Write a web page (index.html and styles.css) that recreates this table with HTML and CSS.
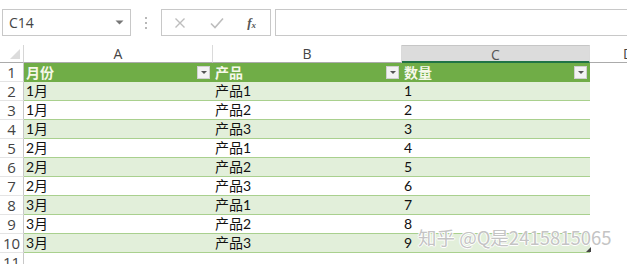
FILE: index.html
```html
<!DOCTYPE html>
<html lang="zh">
<head>
<meta charset="utf-8">
<title>Sheet</title>
<link rel="stylesheet" href="styles.css">
</head>
<body>
<div class="app">
  <div class="toolbar">
    <div class="namebox">
      <span class="ref">C14</span>
      <svg class="nb-arrow" width="9" height="5" viewBox="0 0 9 5"><path d="M0.5 0.5h8L4.5 4.5z" fill="#777"/></svg>
    </div>
    <div class="dots">
      <span></span><span></span><span></span>
    </div>
    <div class="fnbox">
      <svg width="12" height="12" viewBox="0 0 12 12"><path d="M1.5 1.5l9 9M10.5 1.5l-9 9" stroke="#bdbdbd" stroke-width="1.4" fill="none"/></svg>
      <svg width="14" height="12" viewBox="0 0 14 12"><path d="M1 6.5l4 4L13 1.5" stroke="#bdbdbd" stroke-width="1.6" fill="none"/></svg>
      <span class="fx">f<sub>x</sub></span>
    </div>
    <div class="formula"></div>
  </div>

  <div class="sheet">
    <div class="corner"><span class="tri"></span></div>
    <div class="colh">A</div>
    <div class="colh">B</div>
    <div class="colh sel">C</div>
    <div class="colh rest">D</div>

    <div class="rowh">1</div>
    <div class="th">月份<span class="flt"></span></div>
    <div class="th">产品<span class="flt"></span></div>
    <div class="th">数量<span class="flt"></span></div>
    <div class="blank"></div>

    <div class="rowh">2</div><div class="td band">1月</div><div class="td band">产品1</div><div class="td band">1</div><div class="blank"></div>
    <div class="rowh">3</div><div class="td">1月</div><div class="td">产品2</div><div class="td">2</div><div class="blank"></div>
    <div class="rowh">4</div><div class="td band">1月</div><div class="td band">产品3</div><div class="td band">3</div><div class="blank"></div>
    <div class="rowh">5</div><div class="td">2月</div><div class="td">产品1</div><div class="td">4</div><div class="blank"></div>
    <div class="rowh">6</div><div class="td band">2月</div><div class="td band">产品2</div><div class="td band">5</div><div class="blank"></div>
    <div class="rowh">7</div><div class="td">2月</div><div class="td">产品3</div><div class="td">6</div><div class="blank"></div>
    <div class="rowh">8</div><div class="td band">3月</div><div class="td band">产品1</div><div class="td band">7</div><div class="blank"></div>
    <div class="rowh">9</div><div class="td">3月</div><div class="td">产品2</div><div class="td">8</div><div class="blank"></div>
    <div class="rowh">10</div><div class="td band">3月</div><div class="td band">产品3</div><div class="td band last">9<span class="handle"></span></div><div class="blank"></div>
    <div class="rowh">11</div><div class="empty"></div><div class="empty"></div><div class="empty"></div><div class="blank"></div>
  </div>

  <div class="watermark">知乎 @Q是2415815065</div>
</div>
</body>
</html>
```

FILE: styles.css
```css
html, body {
  margin: 0;
  padding: 0;
  background: #ffffff;
  overflow: hidden;
}

.app {
  position: relative;
  width: 627px;
  height: 264px;
  overflow: hidden;
  font-family: "Lato", "Noto Sans CJK SC", sans-serif;
}

.toolbar {
  display: flex;
  align-items: center;
  height: 45px;
  padding-left: 2px;
  box-sizing: border-box;
}

.namebox {
  width: 129px;
  height: 27px;
  box-sizing: border-box;
  border: 1px solid #c8c8c8;
  display: flex;
  align-items: center;
  justify-content: space-between;
  padding: 0 6px 0 6px;
}

.ref {
  font-family: "Open Sans", "Liberation Sans", sans-serif;
  font-size: 14px;
  color: #444;
}

.dots {
  width: 30px;
  display: flex;
  flex-direction: column;
  align-items: center;
  gap: 3px;
}

.dots span {
  width: 2px;
  height: 2px;
  background: #b8b8b8;
}

.fnbox {
  width: 110px;
  height: 27px;
  box-sizing: border-box;
  border: 1px solid #c8c8c8;
  display: flex;
  align-items: center;
  justify-content: space-between;
  padding: 0 14px 0 12px;
}

.fx {
  font-family: "Liberation Serif", serif;
  font-style: italic;
  font-weight: bold;
  font-size: 13px;
  color: #555;
}

.fx sub {
  font-size: 9px;
  vertical-align: -1px;
}

.formula {
  flex: 1;
  height: 27px;
  margin-left: 4px;
  box-sizing: border-box;
  border: 1px solid #c8c8c8;
  border-right: none;
}

.sheet {
  display: grid;
  grid-template-columns: 24px 189px 189px 188px 1fr;
  grid-template-rows: 18px repeat(11, 19px);
}

.corner {
  position: relative;
  border-right: 1px solid #d6d6d6;
  border-bottom: 1px solid #ababab;
}

.corner .tri {
  position: absolute;
  right: 3px;
  bottom: 3px;
  width: 0;
  height: 0;
  border-left: 10px solid transparent;
  border-bottom: 10px solid #dcdcdc;
}

.colh {
  font-family: "Open Sans", "Liberation Sans", sans-serif;
  font-size: 14px;
  color: #444;
  text-align: center;
  line-height: 18px;
  border-right: 1px solid #dadada;
  border-bottom: 1px solid #ababab;
  box-sizing: border-box;
}

.colh.sel {
  background: #dcdcdc;
  border-bottom: 2px solid #217346;
  border-top: 1px solid #c6c6c6;
  color: #555;
}

.colh.rest {
  border-right: none;
  text-align: left;
  padding-left: 33px;
}

.rowh {
  font-family: "Open Sans", "Liberation Sans", sans-serif;
  font-size: 15px;
  color: #444;
  text-align: center;
  line-height: 19px;
  border-right: 1px solid #c8c8c8;
  border-bottom: 1px solid #e4e4e4;
  box-sizing: border-box;
}

.th {
  position: relative;
  background: #70ad47;
  color: #f6f8ea;
  font-weight: bold;
  font-size: 14px;
  line-height: 19px;
  padding-left: 2px;
  box-sizing: border-box;
}

.flt {
  position: absolute;
  right: 3px;
  top: 3px;
  width: 13px;
  height: 13px;
  box-sizing: border-box;
  background: #f3f3f3;
  border: 1px solid #d0d0d0;
}

.flt::after {
  content: "";
  position: absolute;
  left: 3px;
  top: 4px;
  border-left: 3px solid transparent;
  border-right: 3px solid transparent;
  border-top: 3px solid #555;
}

.td {
  position: relative;
  background: #ffffff;
  color: #111;
  font-size: 14px;
  line-height: 18px;
  padding-left: 2px;
  border-bottom: 1px solid #a9d08e;
  box-sizing: border-box;
}

.td.band {
  background: #e2efda;
}

.handle {
  position: absolute;
  right: -1px;
  bottom: 0;
  width: 0;
  height: 0;
  border-left: 5px solid transparent;
  border-bottom: 5px solid #444;
}

.blank, .empty {
  background: #ffffff;
}

.watermark {
  position: absolute;
  left: 418px;
  top: 224px;
  font-family: "Noto Sans CJK SC", sans-serif;
  font-size: 18.5px;
  color: #c4c4c4;
  text-shadow: 1px 0 0 #fff, -1px 0 0 #fff, 0 1px 0 #fff, 0 -1px 0 #fff;
  white-space: nowrap;
}
```
